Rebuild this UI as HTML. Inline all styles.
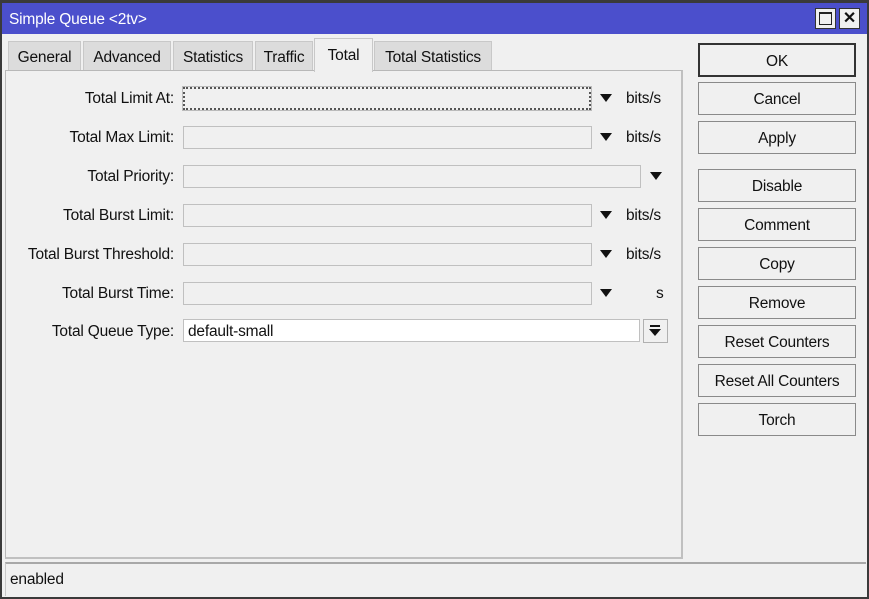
<!DOCTYPE html>
<html><head><style>
*{box-sizing:border-box;margin:0;padding:0}
body{width:869px;height:599px;background:#fff;font-family:"Liberation Sans",Arial,sans-serif;font-size:15.5px;color:#111;position:relative;overflow:hidden;letter-spacing:-0.2px}
.a{position:absolute}
.win{left:0;top:0;width:869px;height:599px;background:#f0f0f0;border:2px solid #3a3a3a;border-top:3px solid #3a3a3a}
.title{left:2px;top:3px;width:865px;height:31px;background:#4b4fcc;color:#fff;font-size:15.5px;padding:8px 0 0 7px}
.tb{top:8px;width:21px;height:21px;background:#f0f0f0;border:1px solid #333}
.tab{top:41px;height:30px;background:#dcdcdc;border:1px solid #c8c8c8;border-bottom:none;text-align:center;padding-top:7px}
.panel{left:5px;top:70px;width:678px;height:489px;border:1px solid #b8b8b8;border-right:2px solid #c0c0c0;border-bottom:2px solid #c0c0c0;background:#f0f0f0}
.lab{right:695px;text-align:right}
.in{left:183px;height:23px;border:1px solid #c0c0c0;background:#f0f0f0}
.arr{width:0;height:0;border-left:6px solid transparent;border-right:6px solid transparent;border-top:8px solid #111}
.unit{left:626px}
.btn{left:698px;width:158px;height:33px;border:1px solid #8a8a8a;background:#f0f0f0;text-align:center;padding-top:8px}
</style></head><body>
<div class="a win"></div>
<div class="a title">Simple Queue &lt;2tv&gt;</div>
<div class="a tb" style="left:815px"><div class="a" style="left:3px;top:3px;width:13px;height:13px;border:1px solid #222;border-top-width:2px"></div></div>
<div class="a tb" style="left:839px;text-align:center;font-weight:bold;font-size:16px;line-height:19px">✕</div>

<div class="a tab" style="left:8px;width:73px">General</div>
<div class="a tab" style="left:83px;width:88px">Advanced</div>
<div class="a tab" style="left:173px;width:80px">Statistics</div>
<div class="a tab" style="left:255px;width:58px">Traffic</div>
<div class="a tab" style="left:374px;width:118px">Total Statistics</div>
<div class="a panel"></div>
<div class="a" style="left:314px;top:38px;width:59px;height:34px;background:#f0f0f0;border:1px solid #c8c8c8;border-bottom:none;text-align:center;padding-top:8px">Total</div>

<div class="a lab" style="top:90px">Total Limit At:</div>
<div class="a in" style="top:87px;width:408px;border:2px dotted #555;outline:1px solid #bbb"></div>
<div class="a arr" style="left:600px;top:94px"></div><div class="a unit" style="top:90px">bits/s</div>

<div class="a lab" style="top:129px">Total Max Limit:</div>
<div class="a in" style="top:126px;width:409px"></div>
<div class="a arr" style="left:600px;top:133px"></div><div class="a unit" style="top:129px">bits/s</div>

<div class="a lab" style="top:168px">Total Priority:</div>
<div class="a in" style="top:165px;width:458px"></div>
<div class="a arr" style="left:650px;top:172px"></div>

<div class="a lab" style="top:207px">Total Burst Limit:</div>
<div class="a in" style="top:204px;width:409px"></div>
<div class="a arr" style="left:600px;top:211px"></div><div class="a unit" style="top:207px">bits/s</div>

<div class="a lab" style="top:246px">Total Burst Threshold:</div>
<div class="a in" style="top:243px;width:409px"></div>
<div class="a arr" style="left:600px;top:250px"></div><div class="a unit" style="top:246px">bits/s</div>

<div class="a lab" style="top:285px">Total Burst Time:</div>
<div class="a in" style="top:282px;width:409px"></div>
<div class="a arr" style="left:600px;top:289px"></div><div class="a" style="left:656px;top:285px">s</div>

<div class="a lab" style="top:323px">Total Queue Type:</div>
<div class="a in" style="top:319px;width:457px;background:#fff;padding:3px 0 0 4px">default-small</div>
<div class="a" style="left:643px;top:319px;width:25px;height:24px;border:1px solid #b0b0b0;background:#f0f0f0"><div class="a" style="left:6px;top:5px;width:10px;height:2px;background:#111"></div><div class="a arr" style="left:5px;top:9px;border-left-width:6px;border-right-width:6px;border-top-width:7px"></div></div>

<div class="a btn" style="top:43px;border:2px solid #333;height:34px">OK</div>
<div class="a btn" style="top:82px">Cancel</div>
<div class="a btn" style="top:121px">Apply</div>
<div class="a btn" style="top:169px">Disable</div>
<div class="a btn" style="top:208px">Comment</div>
<div class="a btn" style="top:247px">Copy</div>
<div class="a btn" style="top:286px">Remove</div>
<div class="a btn" style="top:325px">Reset Counters</div>
<div class="a btn" style="top:364px">Reset All Counters</div>
<div class="a btn" style="top:403px">Torch</div>

<div class="a" style="left:5px;top:562px;width:861px;height:34px;border-top:2px solid #a8a8a8;border-left:1px solid #c8c8c8;padding:7px 0 0 4px">enabled</div>
</body></html>
